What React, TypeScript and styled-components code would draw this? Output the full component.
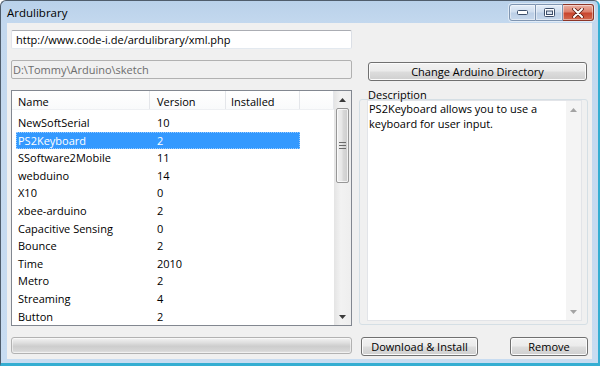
import * as React from 'react';
import styled, { createGlobalStyle } from 'styled-components';

const GlobalStyle = createGlobalStyle`
  html, body {
    margin: 0;
    padding: 0;
    background: #ffffff;
  }
  body {
    font-family: "Open Sans", "Noto Sans", "Liberation Sans", sans-serif;
    font-size: 11px;
    color: #000000;
  }
`;

const Window = styled.div`
  width: 600px;
  height: 366px;
  box-sizing: border-box;
  display: flex;
  flex-direction: column;
  border-style: solid;
  border-width: 1px 2px 3px 1px;
  border-color: #4f5d6c #35aed2 #35aed2 #4f5d6c;
  border-radius: 6px 6px 0 0;
  background: linear-gradient(#b9d1ea 0px, #c3d8ee 22px, #c8dcf1 100%);
  padding: 0 6px 4px 6px;
`;

const TitleBar = styled.div`
  height: 22px;
  display: flex;
  align-items: flex-start;
  justify-content: space-between;
`;

const Title = styled.div`
  font-size: 11.5px;
  line-height: 16px;
  padding-top: 4px;
  color: #000;
`;

const CaptionGroup = styled.div`
  display: flex;
  margin-top: 3px;
  margin-right: -2px;
  height: 17px;
  border-radius: 3px;
  box-shadow: 0 0 0 1px rgba(255, 255, 255, 0.5);
`;

const CaptionButton = styled.div<{ $kind: 'min' | 'max' | 'close' }>`
  box-sizing: border-box;
  width: ${(p) => (p.$kind === 'close' ? 31 : 27)}px;
  height: 17px;
  display: flex;
  align-items: center;
  justify-content: center;
  border: 1px solid ${(p) => (p.$kind === 'close' ? '#8d3527' : '#7f95b1')};
  border-left-width: ${(p) => (p.$kind === 'min' ? 1 : 0)}px;
  border-radius: ${(p) =>
    p.$kind === 'min' ? '3px 0 0 3px' : p.$kind === 'close' ? '0 3px 3px 0' : '0'};
  background: ${(p) =>
    p.$kind === 'close'
      ? 'linear-gradient(#eab0a2 0%, #dd806c 45%, #c9452e 55%, #d36a4f 100%)'
      : 'linear-gradient(#e5eef8 0%, #d0deef 45%, #bccfe6 55%, #c7d8ec 100%)'};
  box-shadow: inset 0 0 0 1px rgba(255, 255, 255, 0.45);
`;

const Client = styled.div`
  flex: 1;
  background: #f0f0f0;
  padding: 7px 4px 3px 4px;
  display: grid;
  grid-template-columns: 341px 229px;
  grid-template-rows: 19px 19px 236px 19px;
  column-gap: 7px;
  row-gap: 11px;
`;

const TextInput = styled.input<{ $disabled?: boolean }>`
  box-sizing: border-box;
  width: 100%;
  height: 19px;
  margin: 0;
  font: inherit;
  font-size: 11px;
  outline: none;
  border: 1px solid;
  border-radius: 2px;
  padding: 0 0 0 ${(p) => (p.$disabled ? 1 : 4)}px;
  background: ${(p) => (p.$disabled ? '#f0f0f0' : '#ffffff')};
  color: ${(p) => (p.$disabled ? '#6d6d6d' : '#000000')};
  border-color: ${(p) =>
    p.$disabled ? '#b1b1b1' : '#abadb3 #dbdfe6 #e3e9ef #e2e3ea'};
`;

const PushButton = styled.div<{ $width?: number }>`
  box-sizing: border-box;
  height: 19px;
  width: ${(p) => (p.$width ? `${p.$width}px` : 'auto')};
  display: flex;
  align-items: center;
  justify-content: center;
  border: 1px solid #707070;
  border-radius: 3px;
  background: linear-gradient(#f2f2f2 0%, #ebebeb 48%, #dddddd 52%, #cfcfcf 100%);
  box-shadow: inset 0 0 0 1px #fbfbfb;
  font-size: 11px;
  color: #000;
`;

const DirButtonSlot = styled.div`
  padding: 2px 0 0 9px;
`;

const ListView = styled.div`
  box-sizing: border-box;
  border: 1px solid #828790;
  background: #fff;
  display: flex;
  overflow: hidden;
`;

const ListContent = styled.div`
  flex: 1;
  display: flex;
  flex-direction: column;
  overflow: hidden;
`;

const HeaderRow = styled.div`
  box-sizing: border-box;
  height: 19px;
  display: flex;
  background: linear-gradient(#ffffff, #f9fafb);
  border-bottom: 1px solid #eef0f3;
`;

const HeaderCell = styled.div<{ $w?: number; $pad: number }>`
  box-sizing: border-box;
  ${(p) => (p.$w ? `width: ${p.$w}px;` : 'flex: 1;')}
  padding: 3px 0 0 ${(p) => p.$pad}px;
  line-height: 15px;
  border-right: 1px solid #e4e6ea;
  color: #000;
  white-space: nowrap;
`;

const ListBody = styled.div`
  padding-top: 4px;
`;

const Row = styled.div<{ $selected?: boolean }>`
  box-sizing: border-box;
  width: 284px;
  height: 17.6px;
  margin-left: 4px;
  display: flex;
  line-height: 16px;
  background: ${(p) => (p.$selected ? '#3399ff' : 'transparent')};
  color: ${(p) => (p.$selected ? '#ffffff' : '#000000')};
  outline: ${(p) => (p.$selected ? '1px dotted #99ccff' : 'none')};
  outline-offset: -1px;
`;

const Cell = styled.div<{ $w: number; $pad: number }>`
  box-sizing: border-box;
  width: ${(p) => p.$w}px;
  padding: 1px 0 0 ${(p) => p.$pad}px;
  white-space: nowrap;
`;

const ScrollBar = styled.div<{ $disabled?: boolean; $w: number }>`
  width: ${(p) => p.$w}px;
  flex-shrink: 0;
  display: flex;
  flex-direction: column;
  background: ${(p) =>
    p.$disabled ? '#f4f4f4' : 'linear-gradient(90deg, #e4e4e4, #f2f2f2 40%, #eeeeee)'};
`;

const ArrowBox = styled.div<{ $h: number }>`
  height: ${(p) => p.$h}px;
  display: flex;
  align-items: center;
  justify-content: center;
  flex-shrink: 0;
`;

const Track = styled.div`
  flex: 1;
  padding: 0 2px 0 2px;
`;

const Thumb = styled.div`
  box-sizing: border-box;
  height: 75px;
  border: 1px solid #979797;
  border-radius: 2px;
  background: linear-gradient(90deg, #f0f0f0 0%, #e6e6e6 45%, #d8d8d8 55%, #cdcdcd 100%);
  box-shadow: inset 0 0 0 1px rgba(255, 255, 255, 0.7);
  display: flex;
  align-items: center;
  justify-content: center;
`;

const GroupBox = styled.div`
  position: relative;
  box-sizing: border-box;
  margin: 9px 0 1px 0;
  border: 1px solid #d5dfe5;
  border-radius: 3px;
  padding: 0 5px 3px 7px;
  display: flex;
`;

const GroupLabel = styled.div`
  position: absolute;
  top: -11px;
  left: 7px;
  height: 11px;
  padding: 0 1px;
  line-height: 11px;
  font-size: 11px;
  white-space: nowrap;
`;

const TextArea = styled.div`
  flex: 1;
  box-sizing: border-box;
  background: #fff;
  border: 1px solid #e2e4e8;
  display: flex;
`;

const TextBody = styled.div`
  flex: 1;
  padding-left: 1px;
  line-height: 15px;
  font-size: 11px;
`;

const BottomButtons = styled.div`
  display: flex;
  justify-content: space-between;
  padding-left: 2px;
`;

const ProgressBar = styled.div`
  box-sizing: border-box;
  height: 17px;
  border: 1px solid #b2b2b2;
  border-radius: 3px;
  background: linear-gradient(#f3f3f3 0%, #e0e0e0 30%, #cdcdcd 55%, #d6d6d6 85%, #e6e6e6 100%);
  box-shadow: inset 0 0 0 1px rgba(255, 255, 255, 0.5);
`;

function Arrow({ dir, color }: { dir: 'up' | 'down'; color: string }) {
  return (
    <svg width="7" height="4" viewBox="0 0 7 4">
      {dir === 'up' ? (
        <polygon points="0,4 7,4 3.5,0" fill={color} />
      ) : (
        <polygon points="0,0 7,0 3.5,4" fill={color} />
      )}
    </svg>
  );
}

const libraries: [string, string][] = [
  ['NewSoftSerial', '10'],
  ['PS2Keyboard', '2'],
  ['SSoftware2Mobile', '11'],
  ['webduino', '14'],
  ['X10', '0'],
  ['xbee-arduino', '2'],
  ['Capacitive Sensing', '0'],
  ['Bounce', '2'],
  ['Time', '2010'],
  ['Metro', '2'],
  ['Streaming', '4'],
  ['Button', '2'],
];

export default function App() {
  return (
    <>
      <GlobalStyle />
      <Window>
        <TitleBar>
          <Title>Ardulibrary</Title>
          <CaptionGroup>
            <CaptionButton $kind="min">
              <svg width="11" height="5" viewBox="0 0 11 5">
                <rect x="0.5" y="0.5" width="10" height="4" rx="1" fill="#fff" stroke="#3c4e6a" />
              </svg>
            </CaptionButton>
            <CaptionButton $kind="max">
              <svg width="11" height="9" viewBox="0 0 11 9">
                <rect x="0.5" y="0.5" width="10" height="8" rx="1" fill="#fff" stroke="#3c4e6a" />
                <rect x="2.5" y="3" width="6" height="3.5" fill="#d8e3f1" stroke="#3c4e6a" strokeWidth="1" />
              </svg>
            </CaptionButton>
            <CaptionButton $kind="close">
              <svg width="12" height="10" viewBox="0 0 12 10">
                <path d="M2 1 L10 9 M10 1 L2 9" stroke="#5b1d13" strokeWidth="3.6" strokeLinecap="round" />
                <path d="M2 1 L10 9 M10 1 L2 9" stroke="#ffffff" strokeWidth="2" strokeLinecap="round" />
              </svg>
            </CaptionButton>
          </CaptionGroup>
        </TitleBar>
        <Client>
          <TextInput readOnly value="http://www.code-i.de/ardulibrary/xml.php" />
          <div />
          <TextInput $disabled readOnly value="D:\Tommy\Arduino\sketch" />
          <DirButtonSlot>
            <PushButton $width={219}>Change Arduino Directory</PushButton>
          </DirButtonSlot>
          <ListView>
            <ListContent>
              <HeaderRow>
                <HeaderCell $w={138} $pad={6}>Name</HeaderCell>
                <HeaderCell $w={76} $pad={7}>Version</HeaderCell>
                <HeaderCell $w={74} $pad={5}>Installed</HeaderCell>
                <HeaderCell $pad={0} />
              </HeaderRow>
              <ListBody>
                {libraries.map(([name, version]) => (
                  <Row key={name} $selected={name === 'PS2Keyboard'}>
                    <Cell $w={134} $pad={2}>{name}</Cell>
                    <Cell $w={76} $pad={7}>{version}</Cell>
                    <Cell $w={74} $pad={5} />
                  </Row>
                ))}
              </ListBody>
            </ListContent>
            <ScrollBar $w={17}>
              <ArrowBox $h={17}>
                <Arrow dir="up" color="#3b3b3b" />
              </ArrowBox>
              <Track>
                <Thumb>
                  <svg width="7" height="7" viewBox="0 0 7 7">
                    <path d="M0 0.5 H7 M0 3.5 H7 M0 6.5 H7" stroke="#6b6b6b" strokeWidth="1" />
                  </svg>
                </Thumb>
              </Track>
              <ArrowBox $h={17}>
                <Arrow dir="down" color="#3b3b3b" />
              </ArrowBox>
            </ScrollBar>
          </ListView>
          <GroupBox>
            <GroupLabel>Description</GroupLabel>
            <TextArea>
              <TextBody>
                PS2Keyboard allows you to use a
                <br />
                keyboard for user input.
              </TextBody>
              <ScrollBar $w={15} $disabled>
                <ArrowBox $h={17}>
                  <Arrow dir="up" color="#a3a3a3" />
                </ArrowBox>
                <Track />
                <ArrowBox $h={17}>
                  <Arrow dir="down" color="#a3a3a3" />
                </ArrowBox>
              </ScrollBar>
            </TextArea>
          </GroupBox>
          <ProgressBar />
          <BottomButtons>
            <PushButton $width={117}>Download &amp; Install</PushButton>
            <PushButton $width={78}>Remove</PushButton>
          </BottomButtons>
        </Client>
      </Window>
    </>
  );
}
